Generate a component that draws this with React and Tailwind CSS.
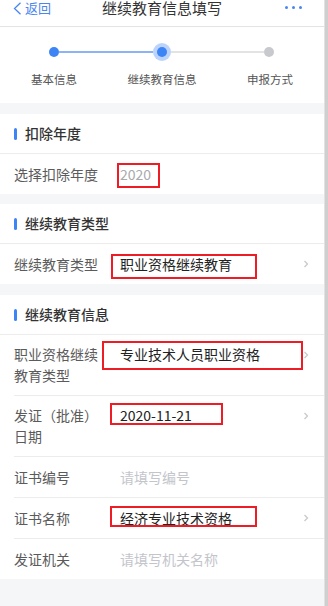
import React from "react";

const FONT = { fontFamily: '"Noto Sans CJK SC", "Noto Sans", sans-serif' };

function Chevron({ className = "" }) {
  return (
    <svg width="6" height="8" viewBox="0 0 6 8" className={`shrink-0 ${className}`}>
      <polyline points="1.5,1 4.5,4 1.5,7" fill="none" stroke="#c9c9c9" strokeWidth="1.3" />
    </svg>
  );
}

function SectionHeader({ title }) {
  return (
    <div className="h-[40px] bg-white border-b border-[#ececec] flex items-center pl-[14px]">
      <span className="w-[3px] h-[12px] rounded-full bg-[#3d84f5] mr-[8px]" />
      <span className="text-[14px] text-[#333] font-medium">{title}</span>
    </div>
  );
}

function RedBox({ left, top, width, height }) {
  return (
    <span
      className="absolute border-2 border-[#ee1c25] pointer-events-none"
      style={{ left, top, width, height }}
    />
  );
}

function Row({ label, value, valueClass = "text-[#222]", chevron, box, h = "h-[40px]", bordered, indent, multi }) {
  return (
    <div className={`bg-white ${indent ? "pl-[14px]" : ""}`}>
      <div
        className={`relative ${h} flex ${multi ? "items-start pt-[9px]" : "items-center"} pr-[15px] ${
          indent ? "" : "pl-[14px]"
        } ${bordered ? "border-b border-[#ececec]" : ""}`}
      >
        <div className="w-[92px] shrink-0 text-[14px] leading-[21px] text-[#5b5b5b]">{label}</div>
        <div className={`ml-[14px] flex-1 text-[14px] leading-[21px] ${valueClass}`}>{value}</div>
        {chevron && <Chevron className={multi ? "mt-[7px]" : ""} />}
        {box && <RedBox {...box} />}
      </div>
    </div>
  );
}

export default function App() {
  return (
    <div className="flex w-[328px] min-h-[606px]" style={FONT}>
      <div className="w-[324px] bg-[#f5f6f8] min-h-[606px]">
        {/* Header */}
        <div className="h-[27px] bg-white border-b border-[#e3e3e3] flex items-start px-[13px] relative">
          <div className="flex items-center text-[#4a86f0] h-[16px]">
            <svg width="9" height="13" viewBox="0 0 9 13" className="mr-[3px]">
              <polyline points="7.5,0.8 1.5,6.5 7.5,12.2" fill="none" stroke="#4a86f0" strokeWidth="1.3" />
            </svg>
            <span className="text-[13px] leading-[16px]">返回</span>
          </div>
          <div className="flex-1 text-center text-[15px] leading-[16px] text-[#333] -ml-[12px]">
            继续教育信息填写
          </div>
          <div className="flex items-center gap-[4px] h-[14px] mr-[9px]">
            <span className="w-[3px] h-[3px] rounded-full bg-[#4a86f0]" />
            <span className="w-[3px] h-[3px] rounded-full bg-[#4a86f0]" />
            <span className="w-[3px] h-[3px] rounded-full bg-[#4a86f0]" />
          </div>
        </div>

        {/* Steps */}
        <div className="h-[76px] bg-white pt-[16px]">
          <div className="flex items-center pl-[49px] pr-[50px] h-[18px]">
            <span className="w-[10px] h-[10px] rounded-full bg-[#3d84f5] shrink-0" />
            <span className="flex-1 h-[2px] bg-[#8db3f5]" />
            <span className="w-[18px] h-[18px] rounded-full bg-[#bcd4fb] shrink-0 flex items-center justify-center">
              <span className="w-[10px] h-[10px] rounded-full bg-[#3d84f5]" />
            </span>
            <span className="flex-1 h-[2px] bg-[#e3e3e6]" />
            <span className="w-[10px] h-[10px] rounded-full bg-[#c8c9ce] shrink-0" />
          </div>
          <div className="grid grid-cols-3 mt-[10px] text-[11.5px] leading-[16px] text-[#555] text-center">
            <span>基本信息</span>
            <span>继续教育信息</span>
            <span>申报方式</span>
          </div>
        </div>

        {/* Section 1 */}
        <div className="mt-[11px]">
          <SectionHeader title="扣除年度" />
          <Row
            label="选择扣除年度"
            value="2020"
            valueClass="text-[#a9a9ae]"
            box={{ left: 117, top: 9, width: 43, height: 25 }}
          />
        </div>

        {/* Section 2 */}
        <div className="mt-[10px]">
          <SectionHeader title="继续教育类型" />
          <Row
            label="继续教育类型"
            value="职业资格继续教育"
            chevron
            box={{ left: 111, top: 10, width: 146, height: 25 }}
          />
        </div>

        {/* Section 3 */}
        <div className="mt-[11px]">
          <SectionHeader title="继续教育信息" />
          <Row
            indent
            bordered
            multi
            h="h-[61px]"
            label="职业资格继续教育类型"
            value="专业技术人员职业资格"
            chevron
            box={{ left: 88, top: 6, width: 201, height: 29 }}
          />
          <Row
            indent
            bordered
            multi
            h="h-[61px]"
            label="发证（批准）日期"
            value="2020-11-21"
            chevron
            box={{ left: 96, top: 7, width: 113, height: 22 }}
          />
          <Row indent bordered label="证书编号" value="请填写编号" valueClass="text-[#c3c5cb]" h="h-[41px]" />
          <Row
            indent
            bordered
            h="h-[41px]"
            label="证书名称"
            value="经济专业技术资格"
            chevron
            box={{ left: 96, top: 8, width: 147, height: 21 }}
          />
          <Row indent label="发证机关" value="请填写机关名称" valueClass="text-[#c3c5cb]" h="h-[40px]" />
        </div>
      </div>
      <div className="w-[4px] bg-[#cfcfcf] border-l border-[#e2e2e2]" />
    </div>
  );
}
